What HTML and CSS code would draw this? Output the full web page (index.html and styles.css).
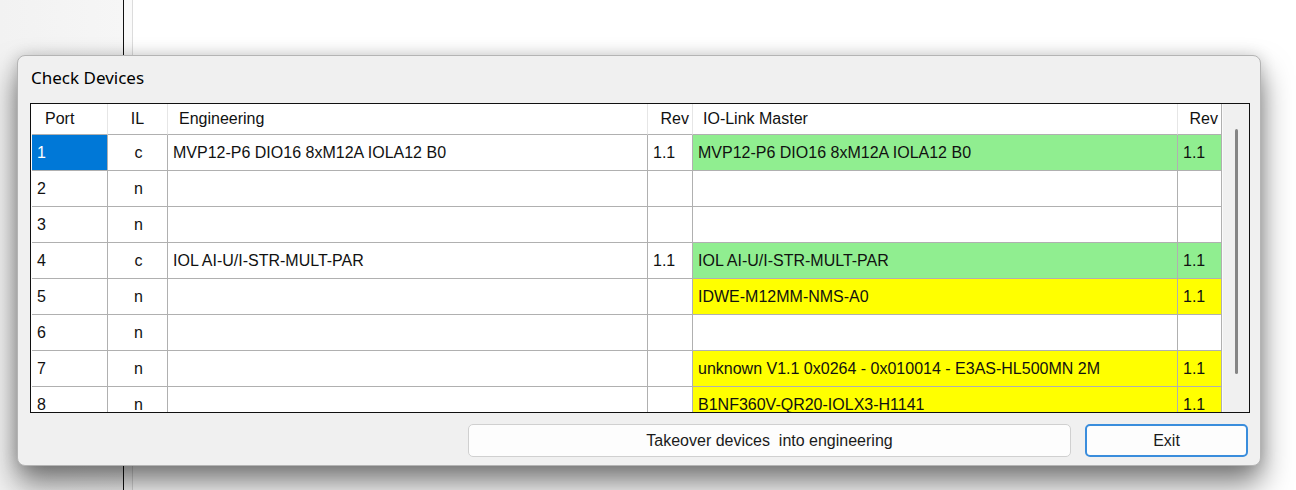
FILE: index.html
```html
<!doctype html>
<html>
<head>
<meta charset="UTF-8">
<title>Check Devices</title>
<link rel="stylesheet" href="styles.css">
</head>
<body>

  <div class="desk">
    <div class="desk-side"></div>
    <div class="desk-gutter"></div>
    <div class="desk-main"></div>
  </div>

  <div class="dialog">
    <div class="dialog-title">Check Devices</div>

    <div class="grid-box">
      <div class="grid-view">
        <table class="grid">
          <colgroup>
            <col class="c-port">
            <col class="c-il">
            <col class="c-eng">
            <col class="c-rev">
            <col class="c-master">
            <col class="c-rev2">
          </colgroup>
          <thead>
            <tr>
              <th class="h-port">Port</th>
              <th class="h-il">IL</th>
              <th class="h-eng">Engineering</th>
              <th class="h-rev">Rev</th>
              <th class="h-master">IO-Link Master</th>
              <th class="h-rev">Rev</th>
            </tr>
          </thead>
          <tbody>
            <tr>
              <td class="selected">1</td>
              <td class="il">c</td>
              <td>MVP12-P6 DIO16 8xM12A IOLA12 B0</td>
              <td>1.1</td>
              <td class="ok">MVP12-P6 DIO16 8xM12A IOLA12 B0</td>
              <td class="ok">1.1</td>
            </tr>
            <tr>
              <td>2</td>
              <td class="il">n</td>
              <td></td>
              <td></td>
              <td></td>
              <td></td>
            </tr>
            <tr>
              <td>3</td>
              <td class="il">n</td>
              <td></td>
              <td></td>
              <td></td>
              <td></td>
            </tr>
            <tr>
              <td>4</td>
              <td class="il">c</td>
              <td>IOL AI-U/I-STR-MULT-PAR</td>
              <td>1.1</td>
              <td class="ok">IOL AI-U/I-STR-MULT-PAR</td>
              <td class="ok">1.1</td>
            </tr>
            <tr>
              <td>5</td>
              <td class="il">n</td>
              <td></td>
              <td></td>
              <td class="new">IDWE-M12MM-NMS-A0</td>
              <td class="new">1.1</td>
            </tr>
            <tr>
              <td>6</td>
              <td class="il">n</td>
              <td></td>
              <td></td>
              <td></td>
              <td></td>
            </tr>
            <tr>
              <td>7</td>
              <td class="il">n</td>
              <td></td>
              <td></td>
              <td class="new">unknown V1.1 0x0264 - 0x010014 - E3AS-HL500MN 2M</td>
              <td class="new">1.1</td>
            </tr>
            <tr>
              <td>8</td>
              <td class="il">n</td>
              <td></td>
              <td></td>
              <td class="new">B1NF360V-QR20-IOLX3-H1141</td>
              <td class="new">1.1</td>
            </tr>
          </tbody>
        </table>
      </div>
      <div class="vscroll">
        <div class="vscroll-thumb"></div>
      </div>
    </div>

    <div class="dialog-buttons">
      <button class="btn btn-takeover">Takeover devices&nbsp; into engineering</button>
      <button class="btn btn-exit">Exit</button>
    </div>
  </div>

</body>
</html>
```

FILE: styles.css
```css
html, body {
  margin: 0;
  height: 100%;
  overflow: hidden;
}

body {
  font-family: "Liberation Sans", Arial, sans-serif;
  background: #fff;
}

/* window behind the dialog */
.desk {
  display: flex;
  height: 100%;
}
.desk-side {
  width: 123px;
  background: linear-gradient(to right, #f2f2f2, #f6f6f6);
  border-right: 1px solid #111;
}
.desk-gutter {
  width: 8px;
  background: #fafafa;
  border-right: 1px solid #dcdcdc;
}
.desk-main {
  flex: 1;
  background: #fff;
}

/* dialog */
.dialog {
  position: absolute;
  left: 17px;
  top: 55px;
  width: 1244px;
  height: 411px;
  box-sizing: border-box;
  padding: 0 10px 0 12px;
  background: #f0f0f0;
  border: 1px solid #b4b4b4;
  border-radius: 8px;
  box-shadow: 0 18px 30px rgba(0, 0, 0, 0.5), 0 0 16px rgba(0, 0, 0, 0.16);
}

.dialog-title {
  font-family: "Noto Sans", "Open Sans", sans-serif;
  font-size: 17px;
  line-height: 24px;
  color: #000;
  padding: 10px 0 0 1px;
  margin-bottom: 13px;
}

.grid-box {
  display: flex;
  height: 310px;
  box-sizing: border-box;
  border: 1px solid #101010;
  background: #fff;
}

.grid-view {
  width: 1191px;
  padding-left: 1px;
  box-sizing: border-box;
  overflow: hidden;
  background: #fff;
}

.grid {
  table-layout: fixed;
  border-collapse: separate;
  border-spacing: 0;
  width: 1190px;
  font-size: 16px;
  color: #111;
}

.c-port { width: 76px; }
.c-il { width: 60px; }
.c-eng { width: 480px; }
.c-rev { width: 45px; }
.c-master { width: 485px; }
.c-rev2 { width: 44px; }

.grid th {
  height: 30px;
  padding: 0;
  font-weight: normal;
  text-align: left;
  vertical-align: middle;
  white-space: nowrap;
  background: #fff;
  border-right: 1px solid #e6e6e6;
  border-bottom: 1px solid #b0b0b0;
}
.grid th:last-child {
  border-right-color: #b0b0b0;
}
.h-port { padding-left: 13px !important; }
.h-il { text-align: center !important; }
.h-eng { padding-left: 11px !important; }
.h-rev { text-align: right !important; padding-right: 3px !important; }
.h-master { padding-left: 10px !important; }

.grid td {
  height: 35px;
  padding: 0 0 0 5px;
  vertical-align: middle;
  white-space: nowrap;
  overflow: hidden;
  border-right: 1px solid #b0b0b0;
  border-bottom: 1px solid #b0b0b0;
}
.grid td.il {
  text-align: center;
  padding: 0 0 0 2px;
}
.grid td.selected {
  background: #0078d7;
  color: #fff;
}
.grid td.ok {
  background: #90ee90;
}
.grid td.new {
  background: #ffff00;
}

.vscroll {
  flex: 1;
  position: relative;
  background: #f0f0f0;
  border-left: 1px solid #fafafa;
}
.vscroll-thumb {
  position: absolute;
  left: 12px;
  top: 25px;
  width: 3px;
  height: 245px;
  border-radius: 2px;
  background: #858585;
}

/* buttons */
.dialog-buttons {
  display: flex;
  justify-content: flex-end;
  gap: 14px;
  margin-top: 11px;
  padding-right: 2px;
}
.btn {
  height: 33px;
  box-sizing: border-box;
  font-family: "Liberation Sans", Arial, sans-serif;
  font-size: 16px;
  color: #1a1a1a;
  background: #fdfdfd;
  border: 1px solid #d0d0d0;
  border-radius: 5px;
  padding: 0;
}
.btn-takeover {
  width: 603px;
}
.btn-exit {
  width: 163px;
  border: 2px solid #3a8ddc;
}
```
